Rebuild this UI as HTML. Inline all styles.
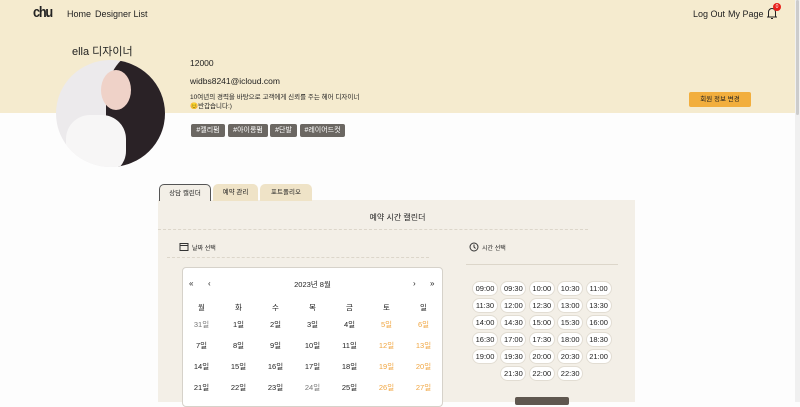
<!DOCTYPE html>
<html><head><meta charset="utf-8"><style>
*{margin:0;padding:0;box-sizing:border-box}
body{width:800px;height:402px;overflow:hidden;background:#fdfdfd;font-family:"Liberation Sans","Noto Sans CJK KR",sans-serif;color:#222;position:relative}
.a{position:absolute}
.hdr{left:0;top:0;width:795px;height:113px;background:#f5ebcf}
.sb{left:795px;top:0;width:5px;height:402px;background:#f0f0f0}
.sb i{position:absolute;left:1px;top:0;width:3px;height:115px;background:#ccc;border-radius:2px}
.tag{top:124px;height:13px;background:#6b6762;color:#fff;font-size:7px;line-height:13px;text-align:center;border-radius:2px}
.tab{top:184px;height:17px;font-size:6.5px;line-height:17px;text-align:center;border-radius:5px 5px 0 0;background:#efe3c7}
.cal{left:182px;top:267px;width:261px;height:140px;background:#fff;border:1px solid #d6d2ca;border-radius:4px}
.d{position:absolute;width:37px;text-align:center;font-size:7.5px}
.t{position:absolute;width:26px;height:15px;background:#fff;border:1px solid #e2ddd3;border-radius:8px;font-size:7.5px;line-height:13px;text-align:center}
</style></head><body>
<div class="a hdr"></div>
<div class="a sb"><i></i></div>
<div class="a" style="left:33px;top:4px;font:bold 15px 'Liberation Sans Narrow','Liberation Sans';letter-spacing:-1.5px;transform:scaleX(0.85);transform-origin:left">chu</div>
<div class="a" style="left:67px;top:9px;font-size:9px">Home</div>
<div class="a" style="left:95px;top:9px;font-size:9px">Designer List</div>
<div class="a" style="left:693px;top:9px;font-size:9px">Log Out</div>
<div class="a" style="left:728px;top:9px;font-size:9px">My Page</div>
<svg class="a" style="left:764px;top:6px" width="16" height="14" viewBox="0 0 16 14"><path d="M3 11h10M4.5 11V6a3.5 3.5 0 0 1 7 0v5M7 12.5h2" fill="none" stroke="#222" stroke-width="1"/></svg>
<div class="a" style="left:773px;top:3px;width:8px;height:8px;border-radius:50%;background:#e8201a;color:#fff;font-size:5px;line-height:8px;text-align:center">0</div>
<div class="a" style="left:72px;top:43px;font-size:11px">ella 디자이너</div>
<div class="a" style="left:56px;top:60px;width:109px;height:107px;border-radius:50%;overflow:hidden;background:#eceaec">
 <div class="a" style="left:50px;top:-5px;width:70px;height:120px;border-radius:40%;background:#2a2226"></div>
 <div class="a" style="left:45px;top:10px;width:30px;height:40px;border-radius:50%;background:#efd2c8"></div>
 <div class="a" style="left:10px;top:55px;width:60px;height:60px;border-radius:40%;background:#f7f6f6"></div>
</div>
<div class="a" style="left:190px;top:58px;font-size:8.5px">12000</div>
<div class="a" style="left:190px;top:76px;font-size:8.5px">widbs8241@icloud.com</div>
<div class="a" style="left:190px;top:93px;font-size:6.5px;line-height:9px">10여년의 경력을 바탕으로 고객에게 신뢰를 주는 헤어 디자이너<br>😊반갑습니다:)</div>
<div class="a tag" style="left:191px;width:34px">#젤리펌</div>
<div class="a tag" style="left:228px;width:40px">#아이롱펌</div>
<div class="a tag" style="left:270px;width:27px">#단발</div>
<div class="a tag" style="left:300px;width:45px">#레이어드컷</div>
<div class="a" style="left:689px;top:92px;width:62px;height:15px;background:#f2ae3d;border-radius:2px;font-size:6.5px;line-height:15px;text-align:center">회원 정보 변경</div>
<div class="a" style="left:158px;top:200px;width:477px;height:202px;background:#f3efe7"></div>
<div class="a tab" style="left:159px;width:52px;background:#f3efe7;border:1px solid #555;border-bottom:none">상담 캘린더</div>
<div class="a tab" style="left:213px;width:45px">예약 관리</div>
<div class="a tab" style="left:260px;width:52px">포트폴리오</div>
<div class="a" style="left:340px;top:212px;width:115px;text-align:center;font-size:8px">예약 시간 캘린더</div>
<div class="a" style="left:158px;top:229px;width:430px;border-top:1px dashed #dcd6ca"></div>
<svg class="a" style="left:179px;top:242px" width="10" height="9"><rect x="1" y="1.5" width="8" height="7" fill="none" stroke="#333"/><line x1="1" y1="3.5" x2="9" y2="3.5" stroke="#333"/></svg>
<div class="a" style="left:192px;top:243px;font-size:6px">날짜 선택</div>
<div class="a" style="left:167px;top:257px;width:262px;border-top:1px dashed #dcd6ca"></div>
<svg class="a" style="left:469px;top:242px" width="10" height="10"><circle cx="5" cy="5" r="4" fill="none" stroke="#333"/><path d="M5 2.5V5l1.5 1.5" fill="none" stroke="#333"/></svg>
<div class="a" style="left:482px;top:243px;font-size:6px">시간 선택</div>
<div class="a" style="left:466px;top:264px;width:152px;border-top:1px solid #dcd6ca"></div>
<div class="a cal">
<div class="a" style="left:6px;top:11px;font-size:8px">«</div>
<div class="a" style="left:25px;top:11px;font-size:8px">‹</div>
<div class="a" style="left:0;top:11px;width:259px;text-align:center;font-size:7.5px">2023년 8월</div>
<div class="a" style="left:230px;top:11px;font-size:8px">›</div>
<div class="a" style="left:247px;top:11px;font-size:8px">»</div>
<div id="g"></div>
</div>
<div id="tm"></div>
<div class="a" style="left:515px;top:397px;width:54px;height:8px;background:#5f574f;border-radius:2px"></div>
<script>
var g=document.getElementById('g'),h='';
var w=['월','화','수','목','금','토','일'];
var rows=[[31,1,2,3,4,5,6],[7,8,9,10,11,12,13],[14,15,16,17,18,19,20],[21,22,23,24,25,26,27]];
var ys=[34,51,72,93,114];
for(var i=0;i<7;i++)h+='<div class="d" style="left:'+(i*37+0)+'px;top:'+ys[0]+'px">'+w[i]+'</div>';
rows.forEach(function(r,ri){r.forEach(function(v,i){var c=i>=5?'#f0a540':((ri==0&&i==0)||(ri==3&&i==3)?'#777':'#222');h+='<div class="d" style="left:'+(i*37)+'px;top:'+ys[ri+1]+'px;color:'+c+'">'+v+'일</div>';});});
g.innerHTML=h;
var t=['09:00','09:30','10:00','10:30','11:00','11:30','12:00','12:30','13:00','13:30','14:00','14:30','15:00','15:30','16:00','16:30','17:00','17:30','18:00','18:30','19:00','19:30','20:00','20:30','21:00'],s='';
t.forEach(function(v,i){s+='<div class="t" style="left:'+(472+(i%5)*28.4)+'px;top:'+(281+Math.floor(i/5)*17)+'px">'+v+'</div>';});
['21:30','22:00','22:30'].forEach(function(v,i){s+='<div class="t" style="left:'+(500.4+i*28.4)+'px;top:366px">'+v+'</div>';});
document.getElementById('tm').innerHTML=s;
</script>
</body></html>
